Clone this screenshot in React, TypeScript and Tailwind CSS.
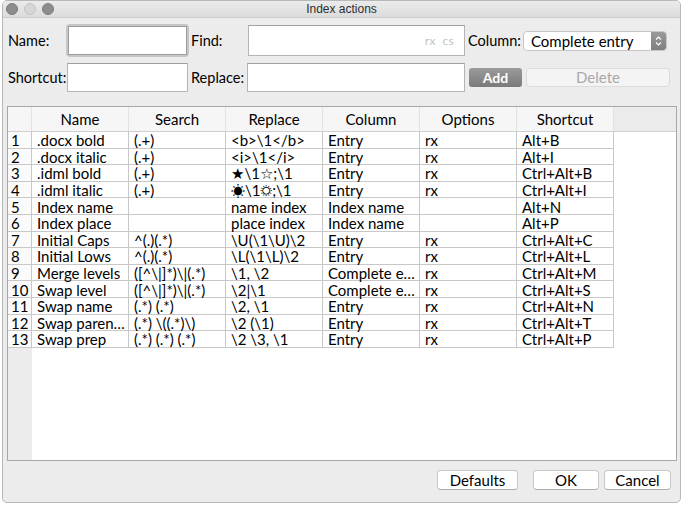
import type { ReactNode } from "react";

const rows: ReactNode[][] = [
  ["1", ".docx bold", "(.+)", "<b>\\1</b>", "Entry", "rx", "Alt+B"],
  ["2", ".docx italic", "(.+)", "<i>\\1</i>", "Entry", "rx", "Alt+I"],
  ["3", ".idml bold", "(.+)", "★\\1☆;\\1", "Entry", "rx", "Ctrl+Alt+B"],
  [
    "4",
    ".idml italic",
    "(.+)",
    <>
      <span className="text-[14px] leading-[14px] font-['Noto_Sans_CJK_JP',sans-serif]">☀</span>\1☼;\1
    </>,
    "Entry",
    "rx",
    "Ctrl+Alt+I",
  ],
  ["5", "Index name", "", "name index", "Index name", "", "Alt+N"],
  ["6", "Index place", "", "place index", "Index name", "", "Alt+P"],
  ["7", "Initial Caps", "^(.)(.*)", "\\U(\\1\\U)\\2", "Entry", "rx", "Ctrl+Alt+C"],
  ["8", "Initial Lows", "^(.)(.*)", "\\L(\\1\\L)\\2", "Entry", "rx", "Ctrl+Alt+L"],
  ["9", "Merge levels", "([^\\|]*)\\|(.*)", "\\1, \\2", "Complete e…", "rx", "Ctrl+Alt+M"],
  ["10", "Swap level", "([^\\|]*)\\|(.*)", "\\2|\\1", "Complete e…", "rx", "Ctrl+Alt+S"],
  ["11", "Swap name", "(.*) (.*)", "\\2, \\1", "Entry", "rx", "Ctrl+Alt+N"],
  ["12", "Swap paren…", "(.*) \\((.*)\\)", "\\2 (\\1)", "Entry", "rx", "Ctrl+Alt+T"],
  ["13", "Swap prep", "(.*) (.*) (.*)", "\\2 \\3, \\1", "Entry", "rx", "Ctrl+Alt+P"],
];

const headers = ["Name", "Search", "Replace", "Column", "Options", "Shortcut"];

// plain bordered text field
const Field = ({ w, h, children }: { w: string; h: string; children?: ReactNode }) => (
  <div
    className={`${w} ${h} bg-white border border-[#b4b4b4] border-t-[#a0a0a0] flex items-center justify-end pr-[10px]`}
  >
    {children}
  </div>
);

const Label = ({ w, children }: { w: string; children: ReactNode }) => (
  <div className={`${w} shrink-0 text-[14.5px] text-black leading-[18px] whitespace-nowrap`}>{children}</div>
);

const Btn = ({ w, children }: { w: string; children: ReactNode }) => (
  <button
    className={`${w} h-[20px] bg-white border border-[#c8c8c8] border-b-[#adadad] rounded-[4px] text-[15px] leading-[18px] text-black flex items-center justify-center`}
  >
    {children}
  </button>
);

export default function App() {
  return (
    <div className="w-[683px] h-[506px] bg-white pl-[2px] font-['Lato','DejaVu_Sans',sans-serif]">
      <div className="w-[679px] h-[503px] bg-[#ececec] border border-[#b8b8b8] rounded-[5px] flex flex-col overflow-hidden">
        {/* Title bar */}
        <div className="h-[17px] shrink-0 relative flex items-center justify-center bg-gradient-to-b from-[#ebebeb] to-[#dcdcdc] border-b border-[#cbcbcb]">
          <div className="absolute left-[3px] top-[2px] flex gap-[6px]">
            <span className="w-[12px] h-[12px] rounded-full bg-[#8d8d8d] border border-[#7b7b7b]" />
            <span className="w-[12px] h-[12px] rounded-full bg-[#d6d6d6] border border-[#c4c4c4]" />
            <span className="w-[12px] h-[12px] rounded-full bg-[#8d8d8d] border border-[#7b7b7b]" />
          </div>
          <span className="text-[12px] text-[#2e2e2e] font-['Liberation_Sans',sans-serif] leading-[14px]">
            Index actions
          </span>
        </div>

        {/* Form */}
        <div className="pl-[5px] pt-[6px]">
          <div className="flex items-center h-[33px]">
            <Label w="w-[58px]">Name:</Label>
            <div className="w-[123px] h-[33px] rounded-[4px] bg-[#c6c6c6] p-[2px]">
              <div className="w-full h-full bg-white border border-[#9c9c9c]" />
            </div>
            <Label w="w-[59px] pl-[2px]">Find:</Label>
            <Field w="w-[217px]" h="h-[31px]">
              <span className="text-[12px] leading-[14px] text-[#c2c2c2] tracking-wide">rx&nbsp;&nbsp;cs</span>
            </Field>
            <Label w="w-[58px] pl-[3px]">Column:</Label>
            <div className="w-[144px] h-[20px] bg-white rounded-[4px] border border-[#c6c6c6] flex items-center overflow-hidden">
              <span className="flex-1 pl-[7px] text-[15px] leading-[18px] text-black whitespace-nowrap">
                Complete entry
              </span>
              <div className="w-[15px] h-full bg-gradient-to-b from-[#9a9a9a] to-[#7f7f7f] flex items-center justify-center">
                <svg width="7" height="12" viewBox="0 0 7 12" fill="none" stroke="white" strokeWidth="1.2">
                  <path d="M1 4.5 L3.5 2 L6 4.5" />
                  <path d="M1 7.5 L3.5 10 L6 7.5" />
                </svg>
              </div>
            </div>
          </div>

          <div className="flex items-center h-[29px] mt-[6px]">
            <Label w="w-[59px]">Shortcut:</Label>
            <Field w="w-[121px]" h="h-[29px]" />
            <Label w="w-[59px] pl-[3px]">Replace:</Label>
            <Field w="w-[218px]" h="h-[29px]" />
            <button className="ml-[4px] w-[53px] h-[19px] rounded-[3px] bg-gradient-to-b from-[#9b9b9b] to-[#7a7a7a] text-white font-bold text-[14px] leading-[17px] flex items-center justify-center">
              Add
            </button>
            <button className="ml-[4px] w-[144px] h-[19px] rounded-[4px] bg-[#f4f4f4] border border-[#dcdcdc] text-[#a9a9a9] text-[15px] leading-[17px] flex items-center justify-center">
              Delete
            </button>
          </div>
        </div>

        {/* Table */}
        <div className="ml-[4px] mt-[14px] w-[670px] h-[355px] border border-[#a8a8a8] flex flex-col bg-white text-[15px] text-black leading-[16px]">
          <div className="h-[25px] shrink-0 flex border-b border-[#cfcfcf]">
            <div className="w-[24px] bg-[#f6f6f6] border-r border-[#e2e2e2]" />
            {headers.map((h) => (
              <div
                key={h}
                className="w-[97px] bg-[#f6f6f6] border-r border-[#e2e2e2] flex items-center justify-center"
              >
                {h}
              </div>
            ))}
            <div className="flex-1 bg-[#ebebeb]" />
          </div>
          <div className="flex-1 flex">
            <div className="w-[24px] bg-[#ececec] flex flex-col">
              {rows.map((r, n) => (
                <div
                  key={n}
                  className="h-[16.6px] bg-[#fbfbfb] border-r border-b border-[#c8c8c8] pl-[3px] pt-[1px] flex items-center"
                >
                  {r[0]}
                </div>
              ))}
            </div>
            <div className="flex flex-col">
              {rows.map((r, n) => (
                <div key={n} className="h-[16.6px] flex">
                  {r.slice(1).map((c, i) => (
                    <div
                      key={i}
                      className="w-[97px] border-r border-b border-[#c8c8c8] pl-[5px] pt-[1px] flex items-center whitespace-nowrap"
                    >
                      {c}
                    </div>
                  ))}
                </div>
              ))}
            </div>
          </div>
        </div>

        {/* Buttons */}
        <div className="flex justify-end items-center pr-[9px] mt-[9px]">
          <Btn w="w-[81px]">Defaults</Btn>
          <div className="w-[15px]" />
          <Btn w="w-[66px]">OK</Btn>
          <div className="w-[5px]" />
          <Btn w="w-[67px]">Cancel</Btn>
        </div>
      </div>
    </div>
  );
}
